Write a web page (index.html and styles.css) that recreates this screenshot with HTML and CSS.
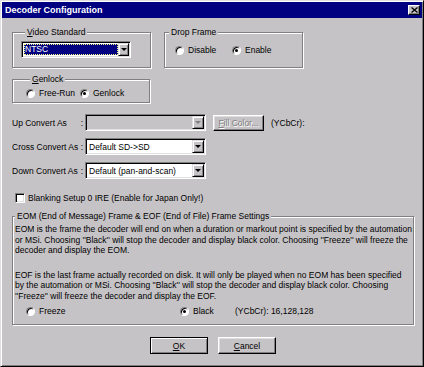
FILE: index.html
```html
<!DOCTYPE html>
<html lang="en">
<head>
    <meta charset="UTF-8">
    <title>Decoder Configuration</title>
    <link rel="stylesheet" href="styles.css">
</head>
<body>
<div class="window">
    <!-- Title Bar -->
    <div class="titlebar">
        <span class="title">Decoder Configuration</span>
        <button class="close">
            <svg width="7" height="6" viewBox="0 0 7 6"><path d="M0.5 0.5L6.5 5.5M6.5 0.5L0.5 5.5" stroke="#000" stroke-width="1.3"/></svg>
        </button>
    </div>

    <div class="dialog">
        <!-- Video Standard / Drop Frame -->
        <div class="top-row">
            <fieldset class="group video">
                <legend><u>V</u>ideo Standard</legend>
                <div class="combo">
                    <span class="value"><span class="selected">NTSC</span></span>
                    <span class="arrow"></span>
                </div>
            </fieldset>
            <fieldset class="group drop">
                <legend>Drop Frame</legend>
                <div class="radio-row">
                    <label class="option"><span class="radio"></span>Disable</label>
                    <label class="option"><span class="radio checked"></span>Enable</label>
                </div>
            </fieldset>
        </div>

        <!-- Genlock -->
        <fieldset class="group genlock">
            <legend><u>G</u>enlock</legend>
            <div class="radio-row">
                <label class="option"><span class="radio"></span>Free-Run</label>
                <label class="option"><span class="radio checked"></span>Genlock</label>
            </div>
        </fieldset>

        <!-- Convert Rows -->
        <div class="convert-rows">
            <div class="field">
                <span class="field-label"><span>Up Convert As</span><span>:</span></span>
                <div class="combo disabled">
                    <span class="value"></span>
                    <span class="arrow"></span>
                </div>
                <button class="btn fill" disabled><u>F</u>ill Color...</button>
                <span class="ycbcr">(YCbCr):</span>
            </div>
            <div class="field">
                <span class="field-label"><span>Cross Convert As</span><span>:</span></span>
                <div class="combo">
                    <span class="value">Default SD-&gt;SD</span>
                    <span class="arrow"></span>
                </div>
            </div>
            <div class="field">
                <span class="field-label"><span>Down Convert As</span><span>:</span></span>
                <div class="combo">
                    <span class="value">Default (pan-and-scan)</span>
                    <span class="arrow"></span>
                </div>
            </div>
        </div>

        <!-- Blanking -->
        <label class="check-row"><span class="checkbox"></span>Blanking Setup 0 IRE (Enable for Japan Only!)</label>

        <!-- EOM / EOF -->
        <fieldset class="group eom">
            <legend>EOM (End of Message) Frame &amp; EOF (End of File) Frame Settings</legend>
            <p class="note">EOM is the frame the decoder will end on when a duration or markout point is specified by the automation<br>or MSi. Choosing ''Black'' will stop the decoder and display black color. Choosing ''Freeze'' will freeze the<br>decoder and display the EOM.</p>
            <p class="note second">EOF is the last frame actually recorded on disk. It will only be played when no EOM has been specified<br>by the automation or MSi. Choosing ''Black'' will stop the decoder and display black color. Choosing<br>''Freeze'' will freeze the decoder and display the EOF.</p>
            <div class="radio-row">
                <label class="option"><span class="radio"></span>Freeze</label>
                <label class="option"><span class="radio checked"></span>Black</label>
                <span class="ycbcr-value">(YCbCr): 16,128,128</span>
            </div>
        </fieldset>

        <!-- Dialog Buttons -->
        <div class="buttons">
            <button class="btn default"><u>O</u>K</button>
            <button class="btn"><u>C</u>ancel</button>
        </div>
    </div>
</div>
</body>
</html>
```

FILE: styles.css
```css
/* General */
* {
    margin: 0;
    padding: 0;
    box-sizing: border-box;
}

body {
    font-family: "Liberation Sans", Arial, sans-serif;
    font-size: 8.5px;
    color: #000;
    background: #c6c3c6;
}

u {
    text-decoration: underline;
    text-underline-offset: 1px;
}

/* Window Frame */
.window {
    width: 424px;
    height: 367px;
    background: #c6c3c6;
    border: 1px solid;
    border-color: #dfdfdf #000 #000 #dfdfdf;
    box-shadow: inset 1px 1px #fff, inset -1px -1px #808080;
    padding: 1px;
    display: flex;
    flex-direction: column;
}

/* Title Bar */
.titlebar {
    height: 16px;
    background: #000080;
    display: flex;
    align-items: center;
    justify-content: space-between;
    padding: 0 2px 0 3px;
}
.title {
    color: #fff;
    font-weight: bold;
    font-size: 9px;
}
.close {
    width: 12px;
    height: 10px;
    background: #c6c3c6;
    border: 1px solid;
    border-color: #fff #000 #000 #fff;
    box-shadow: inset -1px -1px #808080;
    display: flex;
    align-items: center;
    justify-content: center;
}

/* Dialog Body */
.dialog {
    flex: 1;
    padding: 9px 8px 0 10px;
    display: flex;
    flex-direction: column;
}

/* Group Boxes */
.group {
    border: 1px solid #808080;
    box-shadow: inset 1px 1px #fff, 1px 1px #fff;
    padding: 0;
}
.group legend {
    line-height: 11px;
    padding: 0 2px;
    margin-left: 4px;
    background: #c6c3c6;
}

.top-row {
    display: flex;
    gap: 13px;
}
.video, .drop {
    width: 139px;
}
.video {
    padding: 3px 0 9px 8px;
}
.drop .radio-row {
    margin: 7px 0 0 10px;
}
.drop .option:first-child {
    width: 57px;
}

.genlock {
    width: 138px;
    margin-top: 6px;
    padding: 3px 0 4px 13px;
}
.genlock .option:first-child {
    width: 54px;
}

/* Radio Buttons */
.radio-row {
    display: flex;
    align-items: center;
    height: 10px;
}
.option {
    display: inline-flex;
    align-items: center;
    gap: 4px;
}
.radio {
    width: 9px;
    height: 9px;
    border-radius: 50%;
    background: #fff;
    border: 1px solid;
    border-color: #808080 #fff #fff #808080;
    box-shadow: inset 1px 1px #000;
    display: flex;
    align-items: center;
    justify-content: center;
}
.radio.checked::after {
    content: "";
    width: 3px;
    height: 3px;
    border-radius: 50%;
    background: #000;
}

/* Combo Boxes */
.combo {
    width: 110px;
    height: 17px;
    display: flex;
    background: #fff;
    border: 1px solid;
    border-color: #808080 #fff #fff #808080;
    box-shadow: inset 1px 1px #000, inset -1px -1px #dfdfdf;
    padding: 1px;
}
.combo .value {
    flex: 1;
    display: flex;
    align-items: center;
    padding-left: 2px;
    white-space: nowrap;
}
.combo .selected {
    display: block;
    width: 94px;
    height: 11px;
    line-height: 10px;
    margin-left: -1px;
    padding-left: 1px;
    background: #000080;
    color: #fff;
    outline: 1px dotted #ffff80;
    outline-offset: -1px;
}
.combo .arrow {
    width: 12px;
    background: #c6c3c6;
    border: 1px solid;
    border-color: #dfdfdf #000 #000 #dfdfdf;
    box-shadow: inset 1px 1px #fff, inset -1px -1px #808080;
    display: flex;
    align-items: center;
    justify-content: center;
}
.combo .arrow::after {
    content: "";
    border-top: 3px solid #000;
    border-left: 3px solid transparent;
    border-right: 3px solid transparent;
}
.combo.disabled {
    background: #c6c3c6;
}
.combo.disabled .arrow::after {
    border-top-color: #808080;
}

/* Convert Rows */
.convert-rows {
    margin-top: 11px;
    display: flex;
    flex-direction: column;
    gap: 7px;
}
.field {
    display: flex;
    align-items: center;
}
.field-label {
    width: 71px;
    margin-right: 2px;
    display: flex;
    justify-content: space-between;
}
.field .combo {
    width: 121px;
}
.ycbcr {
    margin-left: 7px;
}

/* Buttons */
.btn {
    font-family: inherit;
    font-size: 8.5px;
    color: #000;
    background: #c6c3c6;
    border: 1px solid;
    border-color: #fff #000 #000 #fff;
    box-shadow: inset -1px -1px #808080, inset 1px 1px #dfdfdf;
}
.btn.default {
    border-color: #000;
    box-shadow: inset 1px 1px #fff, inset -1px -1px #808080;
}
.fill {
    width: 51px;
    height: 16px;
    margin-left: 7px;
    color: #808080;
    text-shadow: 1px 1px #fff;
    white-space: nowrap;
}

/* Checkbox */
.check-row {
    margin-top: 13px;
    height: 11px;
    display: flex;
    align-items: center;
    gap: 3px;
    padding-left: 3px;
}
.checkbox {
    width: 10px;
    height: 10px;
    background: #fff;
    border: 1px solid;
    border-color: #808080 #fff #fff #808080;
    box-shadow: inset 1px 1px #000, inset -1px -1px #dfdfdf;
}

/* EOM Group */
.eom {
    margin-top: 8px;
    padding: 2px 0 8px 2px;
}
.eom legend {
    margin-left: 0;
}
.note {
    line-height: 10.5px;
    white-space: nowrap;
}
.note.second {
    margin-top: 14px;
}
.eom .radio-row {
    margin: 5px 0 0 11px;
}
.eom .option:first-child {
    width: 154px;
}
.eom .option:nth-child(2) {
    width: 55px;
}

/* Dialog Buttons */
.buttons {
    margin-top: 12px;
    display: flex;
    justify-content: center;
    gap: 10px;
}
.buttons .btn {
    width: 58px;
    height: 17px;
}
```
